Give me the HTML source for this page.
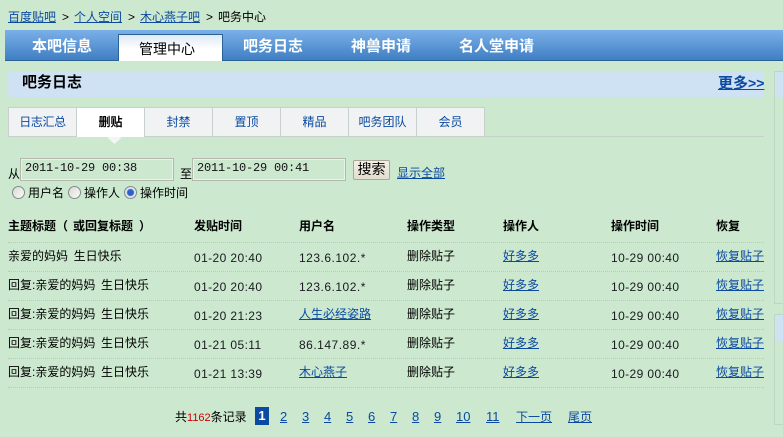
<!DOCTYPE html>
<html><head><meta charset="utf-8">
<style>
html,body{margin:0;padding:0}
body{width:783px;height:437px;overflow:hidden;background:#cce8cf;position:relative;font:12px/16px "Liberation Sans","WenQuanYi Zen Hei","Noto Sans CJK SC",sans-serif;color:#000}
.a{position:absolute;white-space:pre}
.l{color:#0b4aa0;text-decoration:underline}
.b{font-weight:bold}
.n{color:#fff;font-weight:bold;font-size:15px}
.m{letter-spacing:.4px;color:#1a1a20}
.ip{letter-spacing:.5px;color:#1a1a20}
.ti{word-spacing:-.5px}
.box{position:absolute;box-sizing:border-box}
.t{position:absolute;top:107px;height:30px;width:69px;box-sizing:border-box;border:1px solid #c8d0cc;background:#f0f2f4;color:#0b4aa0;text-align:center;line-height:28px}
.d{position:absolute;left:8px;width:756px;height:0;border-top:1px dotted #b9c9bb}
.i{position:absolute;box-sizing:border-box;width:154px;height:23px;top:158px;background:#cce8cf;border:2px solid #e8f4e8;outline:1px solid #b4b8ac;outline-offset:-1px;font:12px/15px "Liberation Mono",monospace;letter-spacing:-.2px;padding:1px 3px;white-space:pre;color:#111}
.r{position:absolute;top:186px;width:13px;height:13px;box-sizing:border-box;border:1px solid #7f8c8a;border-radius:50%;background:linear-gradient(135deg,#d8d8d4,#fbfbf8)}
.p{font-size:13px;top:409px}
</style></head><body>

<div class="a" style="left:8px;top:9px"><span class="l">百度贴吧</span></div>
<div class="a" style="left:62px;top:9px">&gt;</div>
<div class="a" style="left:74px;top:9px"><span class="l">个人空间</span></div>
<div class="a" style="left:128px;top:9px">&gt;</div>
<div class="a" style="left:140px;top:9px"><span class="l">木心燕子吧</span></div>
<div class="a" style="left:206px;top:9px">&gt;</div>
<div class="a" style="left:218px;top:9px">吧务中心</div>

<div class="box" style="left:5px;top:30px;width:778px;height:31px;background:linear-gradient(#7bb0e8,#3f7fc3);border-bottom:1px solid #2b6298"></div>
<div class="box" style="left:118px;top:34px;width:105px;height:27px;background:linear-gradient(#dfe9f6,#fff 55%);border:1px solid #2b6298;border-bottom:0"></div>
<div class="a n" style="left:32px;top:39px">本吧信息</div>
<div class="a" style="left:139px;top:41px;font-size:14px">管理中心</div>
<div class="a n" style="left:243px;top:39px">吧务日志</div>
<div class="a n" style="left:351px;top:39px">神兽申请</div>
<div class="a n" style="left:459px;top:39px">名人堂申请</div>

<div class="box" style="left:8px;top:71px;width:756px;height:26px;background:#cfe2f3"></div>
<div class="a b" style="left:22px;top:75px;font-size:15px">吧务日志</div>
<div class="a l b" style="left:718px;top:75px;font-size:15px">更多<span style="font-size:14px">&gt;&gt;</span></div>

<div class="box" style="left:774px;top:71px;width:9px;height:233px;border:1px solid #c0d6c4;border-right:0;background:linear-gradient(#cfe2f3 26px,#cce8cf 26px)"></div>
<div class="box" style="left:774px;top:314px;width:9px;height:111px;border:1px solid #c0d6c4;border-right:0;background:linear-gradient(#cfe2f3 26px,#cce8cf 26px)"></div>

<div class="box" style="left:8px;top:136px;width:756px;height:1px;background:#c3d2c6"></div>
<div class="t" style="left:8px;letter-spacing:-.4px">日志汇总</div>
<div class="t b" style="left:76px;background:#fff;color:#000;border-bottom:0">删贴</div>
<div class="t" style="left:144px">封禁</div>
<div class="t" style="left:212px">置顶</div>
<div class="t" style="left:280px">精品</div>
<div class="t" style="left:348px">吧务团队</div>
<div class="t" style="left:416px">会员</div>
<svg class="box" style="left:108px;top:137px" width="13" height="7"><path d="M0 0H13V1L6.500 7 0 1Z" fill="#f4f6f6"/></svg>

<div class="a" style="left:8px;top:166px">从</div>
<div class="i" style="left:20px">2011-10-29 00:38</div>
<div class="a" style="left:180px;top:166px">至</div>
<div class="i" style="left:192px">2011-10-29 00:41</div>
<div class="box" style="left:353px;top:160px;width:37px;height:20px;background:linear-gradient(#f4f0e6,#e4ded0);border:1px solid #a8a898;border-radius:2px;text-align:center;line-height:16px;font-size:14px">搜索</div>
<div class="a l" style="left:397px;top:165px">显示全部</div>
<div class="r" style="left:12px"></div>
<div class="a" style="left:28px;top:185px">用户名</div>
<div class="r" style="left:68px"></div>
<div class="a" style="left:84px;top:185px">操作人</div>
<div class="r" style="left:124px;background:radial-gradient(circle,#2f5fc8 0 3px,#dfe6ee 4px)"></div>
<div class="a" style="left:140px;top:185px">操作时间</div>

<div class="a b" style="left:8px;top:218px">主题标题（<span style="margin-left:5px">或回复标题</span><span style="margin-left:6px">）</span></div>
<div class="a b" style="left:194px;top:218px">发贴时间</div>
<div class="a b" style="left:299px;top:218px">用户名</div>
<div class="a b" style="left:407px;top:218px">操作类型</div>
<div class="a b" style="left:503px;top:218px">操作人</div>
<div class="a b" style="left:611px;top:218px">操作时间</div>
<div class="a b" style="left:716px;top:218px">恢复</div>

<div class="d" style="top:242px"></div>
<div class="d" style="top:271px"></div>
<div class="d" style="top:300px"></div>
<div class="d" style="top:329px"></div>
<div class="d" style="top:358px"></div>
<div class="d" style="top:387px"></div>

<div class="a ti" style="left:8px;top:248px">亲爱的妈妈  生日快乐</div>
<div class="a m" style="left:194px;top:250px">01-20 20:40</div>
<div class="a ip" style="left:299px;top:250px">123.6.102.*</div>
<div class="a" style="left:407px;top:248px">删除贴子</div>
<div class="a l" style="left:503px;top:248px">好多多</div>
<div class="a m" style="left:611px;top:250px">10-29 00:40</div>
<div class="a l" style="left:716px;top:248px">恢复贴子</div>

<div class="a ti" style="left:8px;top:277px">回复:亲爱的妈妈  生日快乐</div>
<div class="a m" style="left:194px;top:279px">01-20 20:40</div>
<div class="a ip" style="left:299px;top:279px">123.6.102.*</div>
<div class="a" style="left:407px;top:277px">删除贴子</div>
<div class="a l" style="left:503px;top:277px">好多多</div>
<div class="a m" style="left:611px;top:279px">10-29 00:40</div>
<div class="a l" style="left:716px;top:277px">恢复贴子</div>

<div class="a ti" style="left:8px;top:306px">回复:亲爱的妈妈  生日快乐</div>
<div class="a m" style="left:194px;top:308px">01-20 21:23</div>
<div class="a l" style="left:299px;top:306px">人生必经姿路</div>
<div class="a" style="left:407px;top:306px">删除贴子</div>
<div class="a l" style="left:503px;top:306px">好多多</div>
<div class="a m" style="left:611px;top:308px">10-29 00:40</div>
<div class="a l" style="left:716px;top:306px">恢复贴子</div>

<div class="a ti" style="left:8px;top:335px">回复:亲爱的妈妈  生日快乐</div>
<div class="a m" style="left:194px;top:337px">01-21 05:11</div>
<div class="a ip" style="left:299px;top:337px">86.147.89.*</div>
<div class="a" style="left:407px;top:335px">删除贴子</div>
<div class="a l" style="left:503px;top:335px">好多多</div>
<div class="a m" style="left:611px;top:337px">10-29 00:40</div>
<div class="a l" style="left:716px;top:335px">恢复贴子</div>

<div class="a ti" style="left:8px;top:364px">回复:亲爱的妈妈  生日快乐</div>
<div class="a m" style="left:194px;top:366px">01-21 13:39</div>
<div class="a l" style="left:299px;top:364px">木心燕子</div>
<div class="a" style="left:407px;top:364px">删除贴子</div>
<div class="a l" style="left:503px;top:364px">好多多</div>
<div class="a m" style="left:611px;top:366px">10-29 00:40</div>
<div class="a l" style="left:716px;top:364px">恢复贴子</div>

<div class="a" style="left:175px;top:409px">共<span style="color:#c00;font-size:11px">1162</span>条记录</div>
<div class="box b" style="left:255px;top:407px;width:14px;height:18px;background:#0b4aa0;color:#fff;text-align:center;font-size:13px;line-height:18px">1</div>
<div class="a l p" style="left:280px">2</div>
<div class="a l p" style="left:302px">3</div>
<div class="a l p" style="left:324px">4</div>
<div class="a l p" style="left:346px">5</div>
<div class="a l p" style="left:368px">6</div>
<div class="a l p" style="left:390px">7</div>
<div class="a l p" style="left:412px">8</div>
<div class="a l p" style="left:434px">9</div>
<div class="a l p" style="left:456px">10</div>
<div class="a l p" style="left:486px">11</div>
<div class="a l" style="left:516px;top:409px">下一页</div>
<div class="a l" style="left:568px;top:409px">尾页</div>
</body></html>
